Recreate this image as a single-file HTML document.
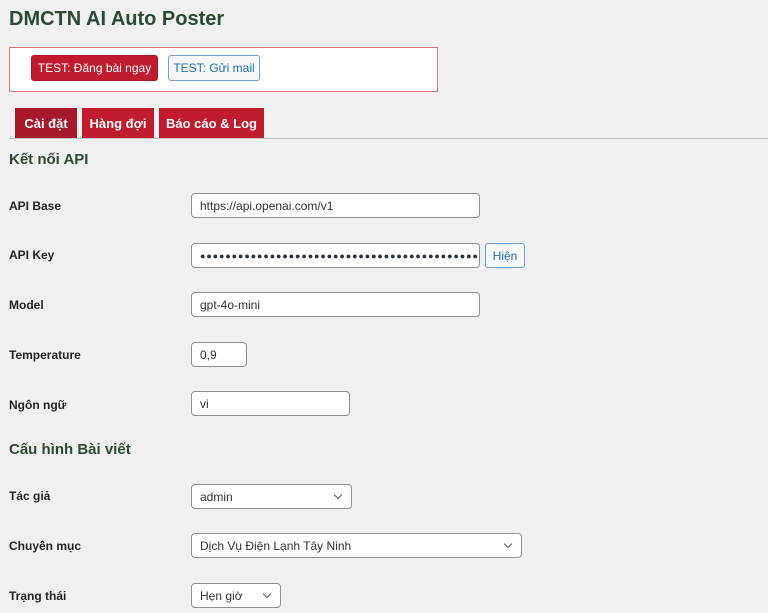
<!DOCTYPE html>
<html><head><meta charset="utf-8"><style>
*{box-sizing:border-box;margin:0;padding:0}
body{width:768px;height:613px;overflow:hidden;background:#f0f0f1;font-family:"Liberation Sans",sans-serif;color:#1d2327;position:relative}
.a{position:absolute}
h1{position:absolute;left:9px;top:8px;font-size:20px;font-weight:bold;color:#2b4a33}
.box{left:9px;top:47px;width:429px;height:45px;background:#fff;border:1px solid #d9707a}
.btn{position:absolute;font-size:12px;border-radius:3px;display:flex;align-items:center;justify-content:center}
.red{background:#c01c2e;color:#fff;border:1px solid #a8172a}
.out{background:#f6f7f7;color:#2271b1;border:1px solid #6fa0cf}
.tab{position:absolute;top:108px;height:31px;background:#c01c2e;color:#fff;font-size:13px;font-weight:bold;display:flex;align-items:center;justify-content:center}
.line{left:9px;right:0;top:138px;height:1px;background:#c3c4c7}
h2{position:absolute;left:9px;font-size:15px;font-weight:bold;color:#2b4a33}
.lb{position:absolute;left:9px;font-size:12px;font-weight:bold;color:#1d2327}
.in{position:absolute;height:25px;background:#fff;border:1px solid #8c8f94;border-radius:4px;font-size:12px;padding-left:8px;display:flex;align-items:center;color:#2c3338}
.sel::after{content:"";position:absolute;right:10px;top:7px;width:5px;height:5px;border-right:1.3px solid #50575e;border-bottom:1.3px solid #50575e;transform:rotate(45deg)}
</style></head><body>
<h1>DMCTN AI Auto Poster</h1>
<div class="a box"></div>
<div class="btn red" style="left:31px;top:55px;width:127px;height:26px">TEST: Đăng bài ngay</div>
<div class="btn out" style="left:168px;top:55px;width:92px;height:26px">TEST: Gửi mail</div>
<div class="tab" style="left:15px;width:62px;background:#a6182a">Cài đặt</div>
<div class="tab" style="left:82px;width:72px">Hàng đợi</div>
<div class="tab" style="left:159px;width:105px">Báo cáo &amp; Log</div>
<div class="a line"></div>
<h2 style="top:151px">Kết nối API</h2>
<div class="lb" style="top:199px">API Base</div>
<div class="in" style="left:191px;top:193px;width:289px">https://api.openai.com/v1</div>
<div class="lb" style="top:248px">API Key</div>
<div class="in" style="left:191px;top:243px;width:289px;font-size:9px;letter-spacing:0.9px;overflow:hidden;white-space:nowrap">●●●●●●●●●●●●●●●●●●●●●●●●●●●●●●●●●●●●●●●●●●●●●●</div>
<div class="btn out" style="left:485px;top:243px;width:40px;height:25px">Hiện</div>
<div class="lb" style="top:298px">Model</div>
<div class="in" style="left:191px;top:292px;width:289px">gpt-4o-mini</div>
<div class="lb" style="top:348px">Temperature</div>
<div class="in" style="left:191px;top:342px;width:56px">0,9</div>
<div class="lb" style="top:398px">Ngôn ngữ</div>
<div class="in" style="left:191px;top:391px;width:159px">vi</div>
<h2 style="top:441px">Cấu hình Bài viết</h2>
<div class="lb" style="top:489px">Tác giả</div>
<div class="in sel" style="left:191px;top:484px;width:161px">admin</div>
<div class="lb" style="top:539px">Chuyên mục</div>
<div class="in sel" style="left:191px;top:533px;width:331px">Dịch Vụ Điện Lạnh Tây Ninh</div>
<div class="lb" style="top:589px">Trạng thái</div>
<div class="in sel" style="left:191px;top:583px;width:90px">Hẹn giờ</div>
</body></html>
